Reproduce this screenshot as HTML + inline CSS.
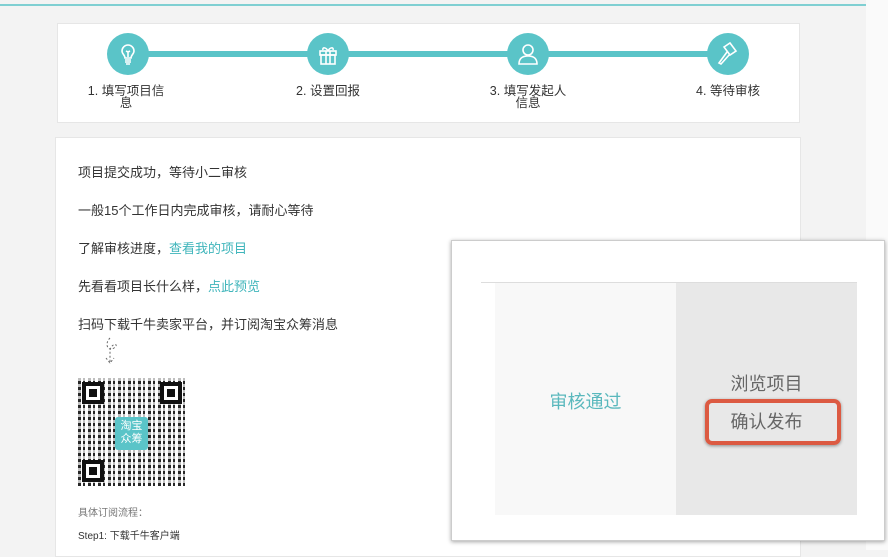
<!DOCTYPE html>
<html><head><meta charset="utf-8"><style>
*{margin:0;padding:0;box-sizing:border-box}
body{width:888px;height:550px;overflow:hidden;background:#f3f3f3;position:relative;font-family:"Liberation Sans","Noto Sans CJK SC",sans-serif;color:#333}
.topline{position:absolute;left:0;top:4px;width:866px;height:2px;background:#7fcfd2}
.rightstrip{position:absolute;left:866px;top:0;width:22px;height:550px;background:#fafafa}
.card{position:absolute;background:#fff;border:1px solid #e6e6e6}
.bar{position:absolute;left:128px;top:51px;width:600px;height:6px;background:#5ac4c8}
.c{position:absolute;width:42px;height:42px;border-radius:50%;background:#5ac4c8;top:33px}
.lbl{position:absolute;font-size:12.5px;text-align:center;line-height:12px;width:90px;color:#333}
.t{position:absolute;left:78px;font-size:13px;color:#333}
.t a{color:#3fb5bb;text-decoration:none}
.pop{position:absolute;left:451px;top:240px;width:434px;height:301px;background:#fff;border:1px solid #ccc;box-shadow:0 1px 4px rgba(0,0,0,.35)}
</style></head><body>
<div class="topline"></div><div class="rightstrip"></div>
<div class="card" style="left:57px;top:23px;width:743px;height:100px"></div>
<div class="bar"></div>
<div class="c" style="left:107px"><svg width="42" height="42" viewBox="0 0 42 42" fill="none" stroke="#fff" stroke-width="1.6"><path d="M15 18a6 6 0 1 1 12 0c0 3-3 4-3 7h-6c0-3-3-4-3-7z"/><path d="M18 27h6M18 29h6M19 31h4M21 24v-5M19 18l2 1 2-1"/></svg></div>
<div class="c" style="left:307px"><svg width="42" height="42" viewBox="0 0 42 42" fill="none" stroke="#fff" stroke-width="1.6"><rect x="13" y="18" width="16" height="4"/><rect x="14" y="22" width="14" height="9"/><path d="M19 18v13M23 18v13M21 18c-2-4-6-4-5-1M21 18c2-4 6-4 5-1"/></svg></div>
<div class="c" style="left:507px"><svg width="42" height="42" viewBox="0 0 42 42" fill="none" stroke="#fff" stroke-width="1.6"><circle cx="21" cy="17" r="5"/><path d="M12 31c0-6 4-8 9-8s9 2 9 8z"/></svg></div>
<div class="c" style="left:707px"><svg width="42" height="42" viewBox="0 0 42 42" fill="none" stroke="#fff" stroke-width="1.6"><path d="M17 14l6-4 6 8-6 4z M20 19l-8 11 2 1 9-10"/></svg></div>
<div class="lbl" style="left:81px;top:85px">1. 填写项目信<br>息</div>
<div class="lbl" style="left:283px;top:85px">2. 设置回报</div>
<div class="lbl" style="left:483px;top:85px">3. 填写发起人<br>信息</div>
<div class="lbl" style="left:683px;top:85px">4. 等待审核</div>
<div class="card" style="left:55px;top:137px;width:746px;height:420px"></div>
<div class="t" style="top:162px">项目提交成功，等待小二审核</div>
<div class="t" style="top:200px">一般15个工作日内完成审核，请耐心等待</div>
<div class="t" style="top:238px">了解审核进度，<a>查看我的项目</a></div>
<div class="t" style="top:276px">先看看项目长什么样，<a>点此预览</a></div>
<div class="t" style="top:314px">扫码下载千牛卖家平台，并订阅淘宝众筹消息</div>
<svg style="position:absolute;left:100px;top:336px" width="24" height="34" fill="none" stroke="#666" stroke-dasharray="2 2"><path d="M10 2c-6 6-2 14 4 10s-2-6-4 2l0 14M6 22l4 5 4-5"/></svg>
<div style="position:absolute;left:78px;top:378px;width:108px;height:108px;background:repeating-linear-gradient(90deg,#111 0 3px,#fff 3px 5px,#111 5px 7px,#fff 7px 10px),#111;opacity:.9"></div>
<div style="position:absolute;left:78px;top:378px;width:108px;height:108px;background:repeating-linear-gradient(0deg,transparent 0 3px,rgba(255,255,255,.7) 3px 6px)"></div>
<div style="position:absolute;left:82px;top:382px;width:22px;height:22px;border:4px solid #111;background:#fff;box-shadow:inset 0 0 0 3px #fff,inset 0 0 0 9px #111"></div>
<div style="position:absolute;left:160px;top:382px;width:22px;height:22px;border:4px solid #111;background:#fff;box-shadow:inset 0 0 0 3px #fff,inset 0 0 0 9px #111"></div>
<div style="position:absolute;left:82px;top:460px;width:22px;height:22px;border:4px solid #111;background:#fff;box-shadow:inset 0 0 0 3px #fff,inset 0 0 0 9px #111"></div>
<div style="position:absolute;left:115px;top:417px;width:33px;height:33px;background:#5ac4c8;border-radius:3px;color:#fff;font-size:11px;line-height:13px;text-align:center;padding-top:3px">淘宝<br>众筹</div>
<div class="t" style="top:504px;font-size:10px;color:#777">具体订阅流程：</div>
<div class="t" style="top:527px;font-size:10px;color:#333">Step1: 下载千牛客户端</div>
<div class="pop">
<div style="position:absolute;left:29px;top:41px;width:376px;height:1px;background:#ddd"></div>
<div style="position:absolute;left:43px;top:42px;width:181px;height:232px;background:#f8f8f8"></div>
<div style="position:absolute;left:224px;top:42px;width:181px;height:232px;background:#e8e8e8"></div>
<div style="position:absolute;left:43px;top:147px;width:181px;text-align:center;font-size:18px;color:#5ab8bd">审核通过</div>
<div style="position:absolute;left:224px;top:129px;width:181px;text-align:center;font-size:18px;color:#666">浏览项目</div>
<div style="position:absolute;left:253px;top:158px;width:136px;height:46px;border:4px solid #dc5a42;border-radius:7px;box-shadow:0 1px 3px rgba(0,0,0,.4)"></div>
<div style="position:absolute;left:224px;top:167px;width:181px;text-align:center;font-size:18px;color:#666">确认发布</div>
</div>
</body></html>
